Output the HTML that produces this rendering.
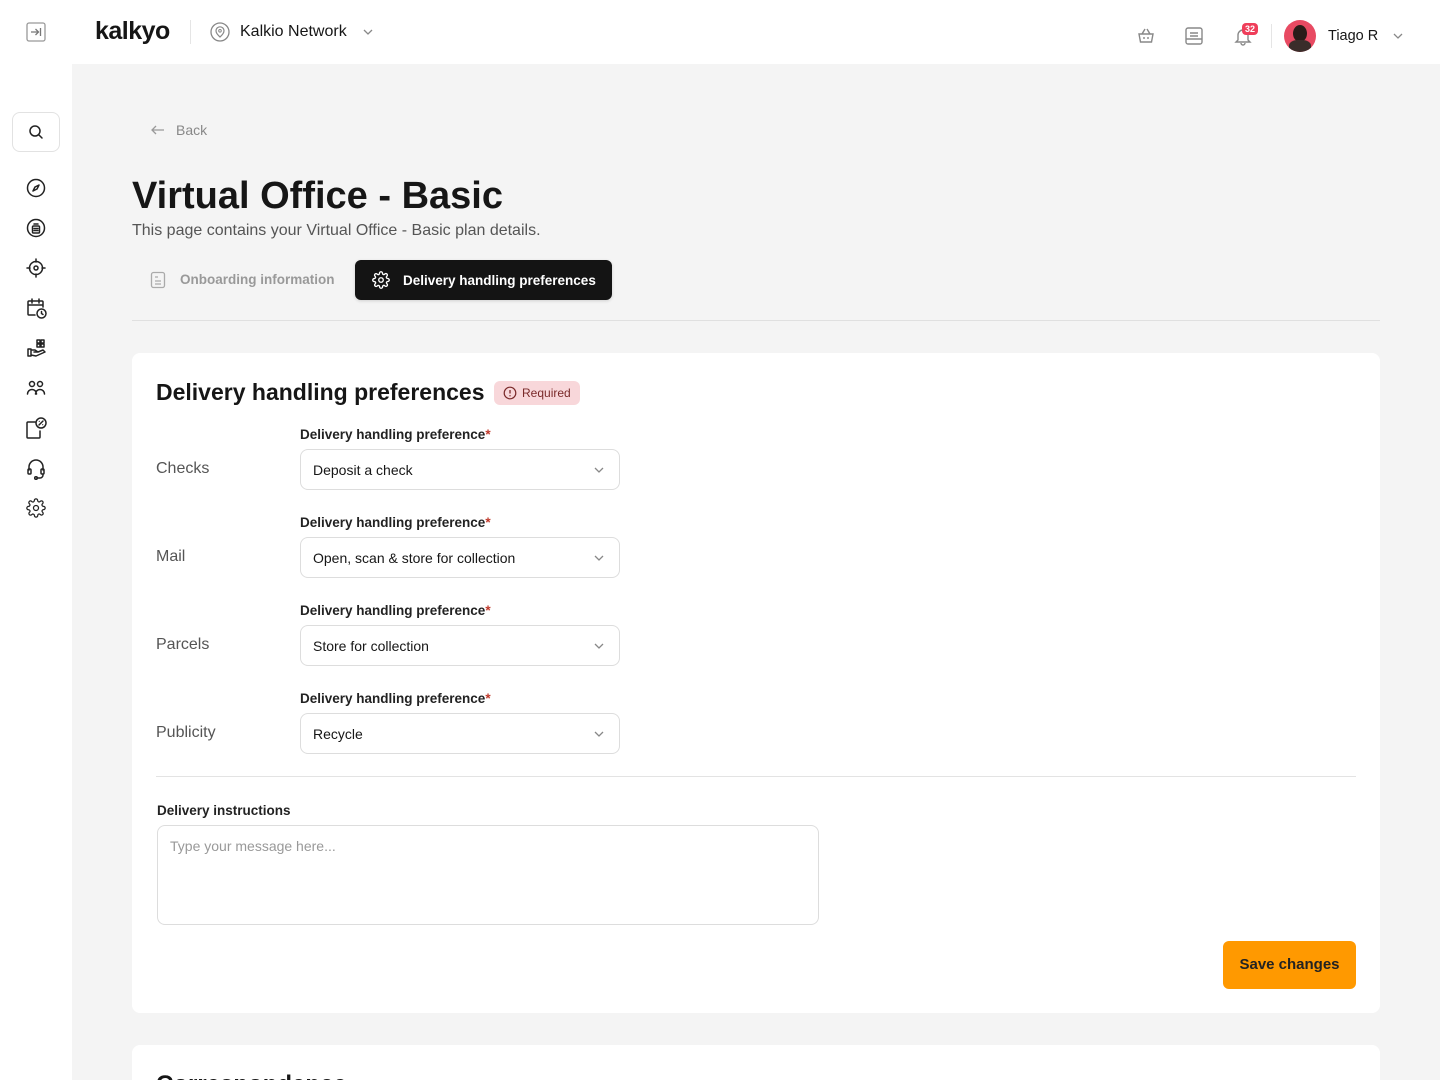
<!DOCTYPE html>
<html style="height:1080px;overflow:hidden"><head><meta charset="utf-8">
<style>
*{box-sizing:border-box;margin:0;padding:0}
body{width:1440px;height:1080px;overflow:hidden;background:#f4f4f4;font-family:"Liberation Sans",sans-serif;color:#161616;position:relative}
.top{position:absolute;left:0;top:0;width:1440px;height:64px;background:#fff}
.side{position:absolute;left:0;top:0;width:72px;height:1080px;background:#fff}
.abs{position:absolute}
svg{display:block}
.ic{stroke:#222;fill:none;stroke-width:1.5;stroke-linecap:round;stroke-linejoin:round}
.card{position:absolute;left:132px;width:1248px;background:#fff;border-radius:8px}
.lbl{position:absolute;font-size:13.5px;font-weight:bold;color:#222}
.lbl span{color:#c0392b}
.sel{position:absolute;left:300px;width:320px;height:41px;border:1px solid #ddd;border-radius:8px;font-size:14px;padding:12px 12px;color:#161616}
.sel svg{position:absolute;right:14px;top:15px}
.row{position:absolute;left:156px;font-size:16px;color:#555}
</style></head><body>
<div class="top"></div>
<div class="side"></div>
<svg class="abs" style="left:26px;top:22px" width="20" height="20" viewBox="0 0 20 20"><rect x="1" y="1" width="18" height="18" rx="2" fill="none" stroke="#999" stroke-width="1.3"/><path d="M5 10h7M9.5 7l3 3-3 3M14.5 6v8" stroke="#777" stroke-width="1.3" fill="none"/></svg>
<div class="abs" style="left:95px;top:17px;font-size:25px;font-weight:bold;letter-spacing:-0.5px">kalkyo</div>
<div class="abs" style="left:190px;top:20px;width:1px;height:24px;background:#e5e5e5"></div>
<svg class="abs" style="left:210px;top:22px" width="20" height="20" viewBox="0 0 20 20"><circle cx="10" cy="10" r="9" fill="none" stroke="#888" stroke-width="1.3"/><path d="M10 15s-4-3.5-4-6.2a4 4 0 018 0C14 11.5 10 15 10 15z" fill="none" stroke="#888" stroke-width="1.2"/><circle cx="10" cy="8.8" r="1.3" fill="none" stroke="#888"/></svg>
<div class="abs" style="left:240px;top:23px;font-size:16px">Kalkio Network</div>
<svg class="abs" style="left:362px;top:27px" width="12" height="10" viewBox="0 0 12 10"><path d="M2 3l4 4 4-4" stroke="#888" fill="none" stroke-width="1.3"/></svg>
<svg class="abs" style="left:1136px;top:26px" width="20" height="20" viewBox="0 0 20 20"><path d="M3 8h14l-1.5 8h-11zM6 8l3-5M14 8l-3-5M8 11v2M12 11v2" stroke="#888" stroke-width="1.4" fill="none"/></svg>
<svg class="abs" style="left:1184px;top:26px" width="20" height="20" viewBox="0 0 20 20"><rect x="2" y="2" width="16" height="16" rx="2" stroke="#888" stroke-width="1.4" fill="none"/><path d="M6 7h8M6 10h8M2 13h16" stroke="#888" stroke-width="1.4"/></svg>
<svg class="abs" style="left:1233px;top:26px" width="20" height="20" viewBox="0 0 20 20"><path d="M5 14V9a5 5 0 0110 0v5l2 2H3zM8 17a2 2 0 004 0" stroke="#888" stroke-width="1.4" fill="none"/></svg>
<div class="abs" style="left:1242px;top:23px;width:16px;height:12px;background:#ef3e5a;border-radius:4px;color:#fff;font-size:9px;font-weight:bold;text-align:center;line-height:12px">32</div>
<div class="abs" style="left:1271px;top:24px;width:1px;height:24px;background:#e5e5e5"></div>
<div class="abs" style="left:1284px;top:20px;width:32px;height:32px;border-radius:50%;background:#e84a62;overflow:hidden"><div style="position:absolute;left:9px;top:5px;width:14px;height:17px;border-radius:50%;background:#2a1c18"></div><div style="position:absolute;left:5px;top:20px;width:22px;height:14px;border-radius:40%;background:#3a2d2a"></div></div>
<div class="abs" style="left:1328px;top:28px;font-size:14.5px">Tiago R</div>
<svg class="abs" style="left:1392px;top:31px" width="12" height="10" viewBox="0 0 12 10"><path d="M2 3l4 4 4-4" stroke="#888" fill="none" stroke-width="1.3"/></svg>
<div class="abs" style="left:12px;top:112px;width:48px;height:40px;border:1px solid #e2e2e2;border-radius:8px"></div>
<svg class="abs" style="left:28px;top:124px" width="16" height="16" viewBox="0 0 16 16"><circle cx="7" cy="7" r="5" class="ic"/><path d="M11 11l3 3" class="ic"/></svg>
<svg class="abs" style="left:26px;top:178px" width="20" height="20" viewBox="0 0 20 20"><circle cx="10" cy="10" r="8.5" class="ic"/><path d="M13 7l-2 4-4 2 2-4z" class="ic"/></svg>
<svg class="abs" style="left:26px;top:218px" width="20" height="20" viewBox="0 0 20 20"><circle cx="10" cy="10" r="8.5" class="ic"/><rect x="6.5" y="8" width="7" height="7" rx="1" class="ic"/><path d="M8 6h4M8 10.5h4M8 12.5h4" class="ic"/></svg>
<svg class="abs" style="left:26px;top:258px" width="20" height="20" viewBox="0 0 20 20"><circle cx="10" cy="10" r="6.5" class="ic"/><circle cx="10" cy="10" r="2" class="ic"/><path d="M10 1v3M10 16v3M1 10h3M16 10h3" class="ic"/></svg>
<svg class="abs" style="left:26px;top:298px" width="22" height="22" viewBox="0 0 22 22"><path d="M9 17H3a1 1 0 01-1-1V4a1 1 0 011-1h13a1 1 0 011 1v5M2 7h15M6 1v4M13 1v4" class="ic"/><circle cx="15.5" cy="15.5" r="4.5" class="ic"/><path d="M15.5 13.5v2l1.5 1" class="ic"/></svg>
<svg class="abs" style="left:26px;top:338px" width="22" height="20" viewBox="0 0 22 20"><path d="M2 11h3v7H2zM5 12h4l3 2h-4M5 17l5 1 9-4-2-2-5 2" class="ic"/><rect x="11" y="2" width="3" height="3" class="ic"/><rect x="15" y="2" width="3" height="3" class="ic"/><rect x="11" y="6" width="3" height="3" class="ic"/><rect x="15" y="6" width="3" height="3" class="ic"/></svg>
<svg class="abs" style="left:26px;top:378px" width="20" height="20" viewBox="0 0 20 20"><circle cx="6" cy="6" r="2.5" class="ic"/><circle cx="14" cy="6" r="2.5" class="ic"/><path d="M1.5 16a4.5 4.5 0 019 0M9.5 16a4.5 4.5 0 019 0" class="ic"/></svg>
<svg class="abs" style="left:24px;top:416px" width="24" height="24" viewBox="0 0 24 24"><path d="M11 6H4a1 1 0 00-1 1v14a1 1 0 001 1h11a1 1 0 001-1v-6" class="ic"/><circle cx="17" cy="7" r="5" class="ic"/><path d="M15 9l4-4" class="ic"/><circle cx="15.3" cy="5.3" r=".6" fill="#222"/><circle cx="18.7" cy="8.7" r=".6" fill="#222"/></svg>
<svg class="abs" style="left:26px;top:458px" width="20" height="22" viewBox="0 0 20 22"><path d="M3 12V9a7 7 0 0114 0v3" class="ic"/><rect x="2" y="11" width="3" height="5" rx="1" class="ic"/><rect x="15" y="11" width="3" height="5" rx="1" class="ic"/><path d="M17 16v1a3 3 0 01-3 3h-3" class="ic"/><circle cx="10" cy="20" r="1.3" class="ic"/></svg>
<svg class="abs" style="left:26px;top:498px" width="20" height="20" viewBox="0 0 24 24"><circle cx="12" cy="12" r="3" class="ic"/><path d="M19.4 15a1.7 1.7 0 00.3 1.8l.1.1a2 2 0 11-2.8 2.8l-.1-.1a1.7 1.7 0 00-1.8-.3 1.7 1.7 0 00-1 1.5V21a2 2 0 11-4 0v-.1a1.7 1.7 0 00-1.1-1.5 1.7 1.7 0 00-1.8.3l-.1.1a2 2 0 11-2.8-2.8l.1-.1a1.7 1.7 0 00.3-1.8 1.7 1.7 0 00-1.5-1H3a2 2 0 110-4h.1a1.7 1.7 0 001.5-1.1 1.7 1.7 0 00-.3-1.8l-.1-.1a2 2 0 112.8-2.8l.1.1a1.7 1.7 0 001.8.3H9a1.7 1.7 0 001-1.5V3a2 2 0 114 0v.1a1.7 1.7 0 001 1.5 1.7 1.7 0 001.8-.3l.1-.1a2 2 0 112.8 2.8l-.1.1a1.7 1.7 0 00-.3 1.8V9a1.7 1.7 0 001.5 1H21a2 2 0 110 4h-.1a1.7 1.7 0 00-1.5 1z" class="ic"/></svg>
<svg class="abs" style="left:150px;top:123px" width="16" height="14" viewBox="0 0 16 14"><path d="M14 7H2M6 3L2 7l4 4" stroke="#999" stroke-width="1.3" fill="none"/></svg>
<div class="abs" style="left:176px;top:122px;font-size:14px;color:#888">Back</div>
<div class="abs" style="left:132px;top:175px;font-size:38px;font-weight:bold">Virtual Office - Basic</div>
<div class="abs" style="left:132px;top:222px;font-size:16px;color:#555">This page contains your Virtual Office - Basic plan details.</div>
<svg class="abs" style="left:150px;top:271px" width="16" height="18" viewBox="0 0 16 18"><rect x="1.5" y="1.5" width="13" height="15" rx="2" fill="none" stroke="#aaa" stroke-width="1.3"/><path d="M5 6h3M5 10h6M5 13h6" stroke="#aaa" stroke-width="1.3"/></svg>
<div class="abs" style="left:180px;top:272px;font-size:13.5px;font-weight:bold;color:#999">Onboarding information</div>
<div class="abs" style="left:355px;top:260px;width:257px;height:40px;background:#141414;border-radius:6px;box-shadow:0 1px 3px rgba(0,0,0,.15)"></div>
<svg class="abs" style="left:372px;top:271px" width="18" height="18" viewBox="0 0 24 24"><circle cx="12" cy="12" r="3" fill="none" stroke="#fff" stroke-width="1.8"/><path d="M19.4 15a1.7 1.7 0 00.3 1.8l.1.1a2 2 0 11-2.8 2.8l-.1-.1a1.7 1.7 0 00-1.8-.3 1.7 1.7 0 00-1 1.5V21a2 2 0 11-4 0v-.1a1.7 1.7 0 00-1.1-1.5 1.7 1.7 0 00-1.8.3l-.1.1a2 2 0 11-2.8-2.8l.1-.1a1.7 1.7 0 00.3-1.8 1.7 1.7 0 00-1.5-1H3a2 2 0 110-4h.1a1.7 1.7 0 001.5-1.1 1.7 1.7 0 00-.3-1.8l-.1-.1a2 2 0 112.8-2.8l.1.1a1.7 1.7 0 001.8.3H9a1.7 1.7 0 001-1.5V3a2 2 0 114 0v.1a1.7 1.7 0 001 1.5 1.7 1.7 0 001.8-.3l.1-.1a2 2 0 112.8 2.8l-.1.1a1.7 1.7 0 00-.3 1.8V9a1.7 1.7 0 001.5 1H21a2 2 0 110 4h-.1a1.7 1.7 0 00-1.5 1z" fill="none" stroke="#fff" stroke-width="1.8"/></svg>
<div class="abs" style="left:403px;top:273px;font-size:13.5px;font-weight:bold;color:#fff">Delivery handling preferences</div>
<div class="abs" style="left:132px;top:320px;width:1248px;height:1px;background:#e0e0e0"></div>
<div class="card" style="top:353px;height:660px"></div>
<div class="abs" style="left:156px;top:379px;font-size:23px;font-weight:bold">Delivery handling preferences</div>
<div class="abs" style="left:494px;top:381px;width:86px;height:24px;background:#f8d7da;border-radius:6px;font-size:12px;color:#7a2a2a;padding:5px 0 0 28px">Required</div>
<svg class="abs" style="left:503px;top:386px" width="14" height="14" viewBox="0 0 14 14"><circle cx="7" cy="7" r="5.8" fill="none" stroke="#7a2a2a" stroke-width="1.2"/><path d="M7 4v3.5" stroke="#7a2a2a" stroke-width="1.3"/><circle cx="7" cy="9.8" r=".7" fill="#7a2a2a"/></svg>

<div class="lbl" style="left:300px;top:427px">Delivery handling preference<span>*</span></div>
<div class="row" style="top:460px">Checks</div>
<div class="sel" style="top:449px">Deposit a check<svg width="12" height="10" viewBox="0 0 12 10"><path d="M2 3l4 4 4-4" stroke="#888" fill="none" stroke-width="1.3"/></svg></div>

<div class="lbl" style="left:300px;top:515px">Delivery handling preference<span>*</span></div>
<div class="row" style="top:548px">Mail</div>
<div class="sel" style="top:537px">Open, scan &amp; store for collection<svg width="12" height="10" viewBox="0 0 12 10"><path d="M2 3l4 4 4-4" stroke="#888" fill="none" stroke-width="1.3"/></svg></div>

<div class="lbl" style="left:300px;top:603px">Delivery handling preference<span>*</span></div>
<div class="row" style="top:636px">Parcels</div>
<div class="sel" style="top:625px">Store for collection<svg width="12" height="10" viewBox="0 0 12 10"><path d="M2 3l4 4 4-4" stroke="#888" fill="none" stroke-width="1.3"/></svg></div>

<div class="lbl" style="left:300px;top:691px">Delivery handling preference<span>*</span></div>
<div class="row" style="top:724px">Publicity</div>
<div class="sel" style="top:713px">Recycle<svg width="12" height="10" viewBox="0 0 12 10"><path d="M2 3l4 4 4-4" stroke="#888" fill="none" stroke-width="1.3"/></svg></div>

<div class="abs" style="left:156px;top:776px;width:1200px;height:1px;background:#e3e3e3"></div>
<div class="lbl" style="left:157px;top:803px">Delivery instructions</div>
<div class="abs" style="left:157px;top:825px;width:662px;height:100px;border:1px solid #ddd;border-radius:8px;font-size:14px;color:#999;padding:12px">Type your message here...</div>
<div class="abs" style="left:1223px;top:941px;width:133px;height:48px;background:#ff9900;border-radius:6px;font-size:15px;font-weight:bold;color:#222;text-align:center;line-height:48px">Save changes</div>
<div class="card" style="top:1045px;height:60px"></div>
<div class="abs" style="left:156px;top:1071px;font-size:24px;font-weight:bold">Correspondence</div>
</body></html>
